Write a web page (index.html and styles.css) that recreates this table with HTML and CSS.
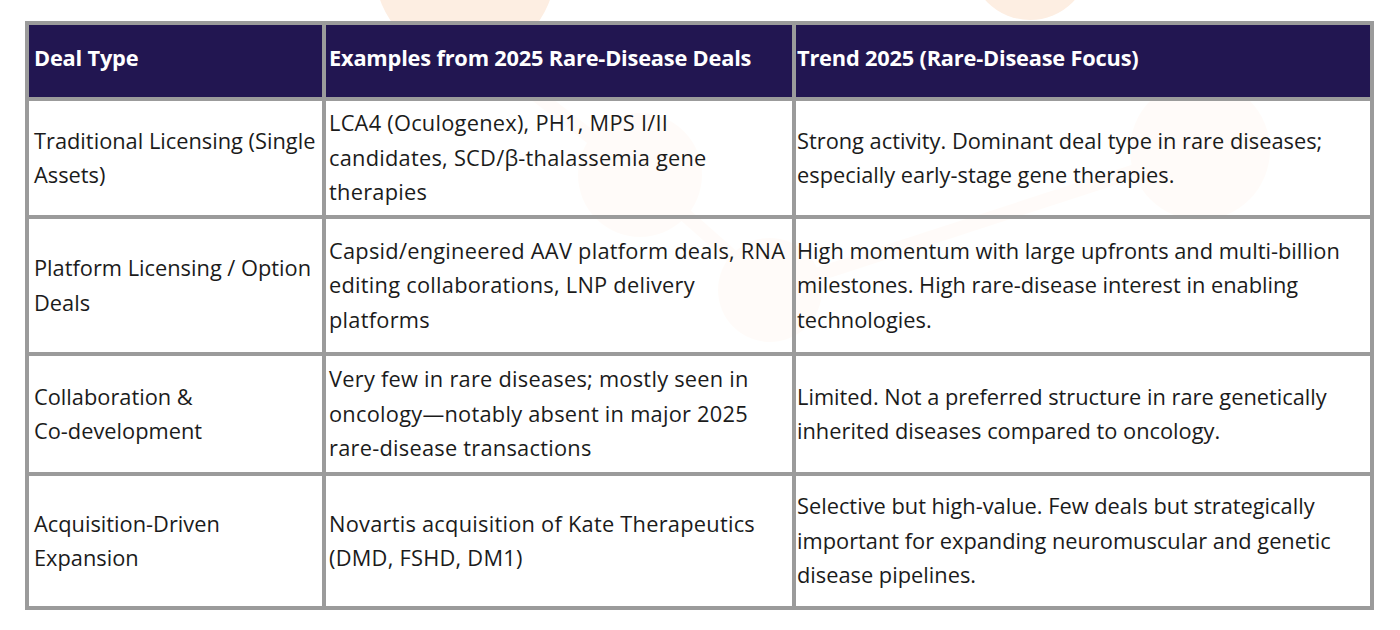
FILE: index.html
```html
<!DOCTYPE html>
<html lang="en">
<head>
<meta charset="utf-8">
<title>2025 Rare-Disease Deals</title>
<link rel="stylesheet" href="styles.css">
</head>
<body>
<div class="page">
  <svg class="watermark" width="1400" height="630" viewBox="0 0 1400 630" aria-hidden="true">
    <g fill="#fdeee2" stroke="none">
      <circle cx="465" cy="-30" r="90"/>
      <circle cx="1030" cy="-40" r="60"/>
      <circle cx="640" cy="175" r="62"/>
      <circle cx="770" cy="290" r="52"/>
      <circle cx="1200" cy="150" r="70"/>
    </g>
    <g stroke="#fdeee2" stroke-width="14" fill="none">
      <line x1="465" y1="40" x2="640" y2="175"/>
      <line x1="640" y1="175" x2="770" y2="290"/>
      <line x1="770" y1="290" x2="1200" y2="150"/>
    </g>
  </svg>
  <table class="deals">
    <colgroup>
      <col class="c1">
      <col class="c2">
      <col class="c3">
    </colgroup>
    <thead>
      <tr class="head">
        <th>Deal Type</th>
        <th>Examples from 2025 Rare-Disease Deals</th>
        <th>Trend 2025 (Rare-Disease Focus)</th>
      </tr>
    </thead>
    <tbody>
      <tr class="r1">
        <td>Traditional Licensing (Single Assets)</td>
        <td>LCA4 (Oculogenex), PH1, MPS I/II candidates, SCD/β-thalassemia gene therapies</td>
        <td>Strong activity. Dominant deal type in rare diseases; especially early-stage gene therapies.</td>
      </tr>
      <tr class="r2">
        <td>Platform Licensing / Option Deals</td>
        <td>Capsid/engineered AAV platform deals, RNA editing collaborations, LNP delivery platforms</td>
        <td>High momentum with large upfronts and multi-billion milestones. High rare-disease interest in enabling technologies.</td>
      </tr>
      <tr class="r3">
        <td>Collaboration &amp; <span class="nowrap">Co-development</span></td>
        <td>Very few in rare diseases; mostly seen in oncology—notably absent in major 2025 <span class="nowrap">rare-disease</span> transactions</td>
        <td>Limited. Not a preferred structure in rare genetically inherited diseases compared to oncology.</td>
      </tr>
      <tr class="r4">
        <td>Acquisition-Driven Expansion</td>
        <td>Novartis acquisition of Kate Therapeutics (DMD, FSHD, DM1)</td>
        <td>Selective but high-value. Few deals but strategically important for expanding neuromuscular and genetic disease pipelines.</td>
      </tr>
    </tbody>
  </table>
</div>
</body>
</html>
```

FILE: styles.css
```css
html, body {
  margin: 0;
  padding: 0;
  background: #ffffff;
}

.page {
  position: relative;
  width: 1400px;
  height: 630px;
  padding: 21px 0 0 25px;
  box-sizing: border-box;
  overflow: hidden;
  font-family: "Open Sans", "Noto Sans", sans-serif;
}

.watermark {
  position: absolute;
  left: 0;
  top: 0;
  z-index: 0;
}

.deals {
  position: relative;
  z-index: 1;
  border-collapse: separate;
  border-spacing: 0;
  table-layout: fixed;
  width: 1349px;
  border-top: 4px solid #9b9b9b;
  border-left: 4px solid #9b9b9b;
}

.c1 { width: 297px; }
.c2 { width: 470px; }
.c3 { width: 578px; }

.deals th,
.deals td {
  border-right: 4px solid #9b9b9b;
  border-bottom: 4px solid #9b9b9b;
  padding: 0 2px 0 5px;
  vertical-align: middle;
  text-align: left;
  box-sizing: border-box;
}

.deals th {
  background: #221651;
  color: #ffffff;
  font-weight: 700;
  font-size: 21.8px;
  height: 76px;
  padding-bottom: 7px;
  letter-spacing: -0.2px;
}

.deals td {
  color: #1b1b1b;
  font-size: 21.8px;
  line-height: 34.5px;
  background: rgba(255, 255, 255, 0.78);
}

.nowrap { white-space: nowrap; }

.deals td:nth-child(2) {
  padding-left: 3px;
  padding-right: 4px;
  letter-spacing: 0.25px;
}
.deals th:nth-child(2) { padding-left: 3px; }
.deals td:nth-child(3),
.deals th:nth-child(3) { padding-left: 1px; }

.r1 td { height: 118px; }
.r2 td { height: 137px; }
.r3 td { height: 120px; }
.r4 td { height: 134px; }
```
